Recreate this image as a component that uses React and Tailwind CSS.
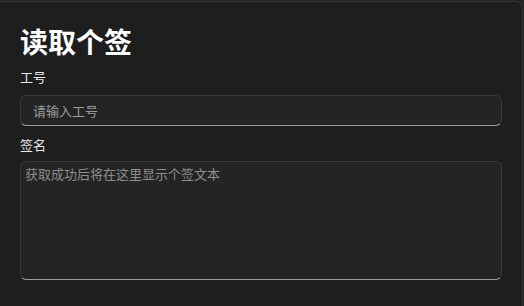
export default function App() {
  return (
    <div
      className="h-[306px] w-[524px] overflow-hidden bg-[#242424] pt-px"
      style={{ fontFamily: '"Noto Sans CJK SC", "Noto Sans", sans-serif' }}
    >
      <div className="h-[320px] w-[523px] rounded-tr-lg border-t border-r border-[#343434] bg-[#1e1e1e] px-5 pt-[19px]">
        <h1 className="text-[28px] font-bold leading-[40px] text-white">读取个签</h1>

        <div className="mt-[7px] flex flex-col">
          <label className="text-[13px] leading-[18px] text-[#e8e8e8]">工号</label>
          <input
            type="text"
            placeholder="请输入工号"
            className="mt-[9px] h-[31px] w-[482px] rounded-[6px] border border-[#383838] border-b-[#9a9a9a] bg-[#242424] px-[12px] text-[13px] text-white placeholder:text-[#9c9c9c] focus:outline-none"
          />
        </div>

        <div className="mt-[10px] flex flex-col">
          <label className="text-[13px] leading-[18px] text-[#e8e8e8]">签名</label>
          <textarea
            placeholder="获取成功后将在这里显示个签文本"
            className="mt-[7px] h-[119px] w-[482px] resize-none rounded-[6px] border border-[#383838] border-b-[#9a9a9a] bg-[#242424] px-[4px] py-[2px] text-[13px] leading-[20px] text-white placeholder:text-[#8e8e8e] focus:outline-none"
          />
        </div>
      </div>
    </div>
  );
}
